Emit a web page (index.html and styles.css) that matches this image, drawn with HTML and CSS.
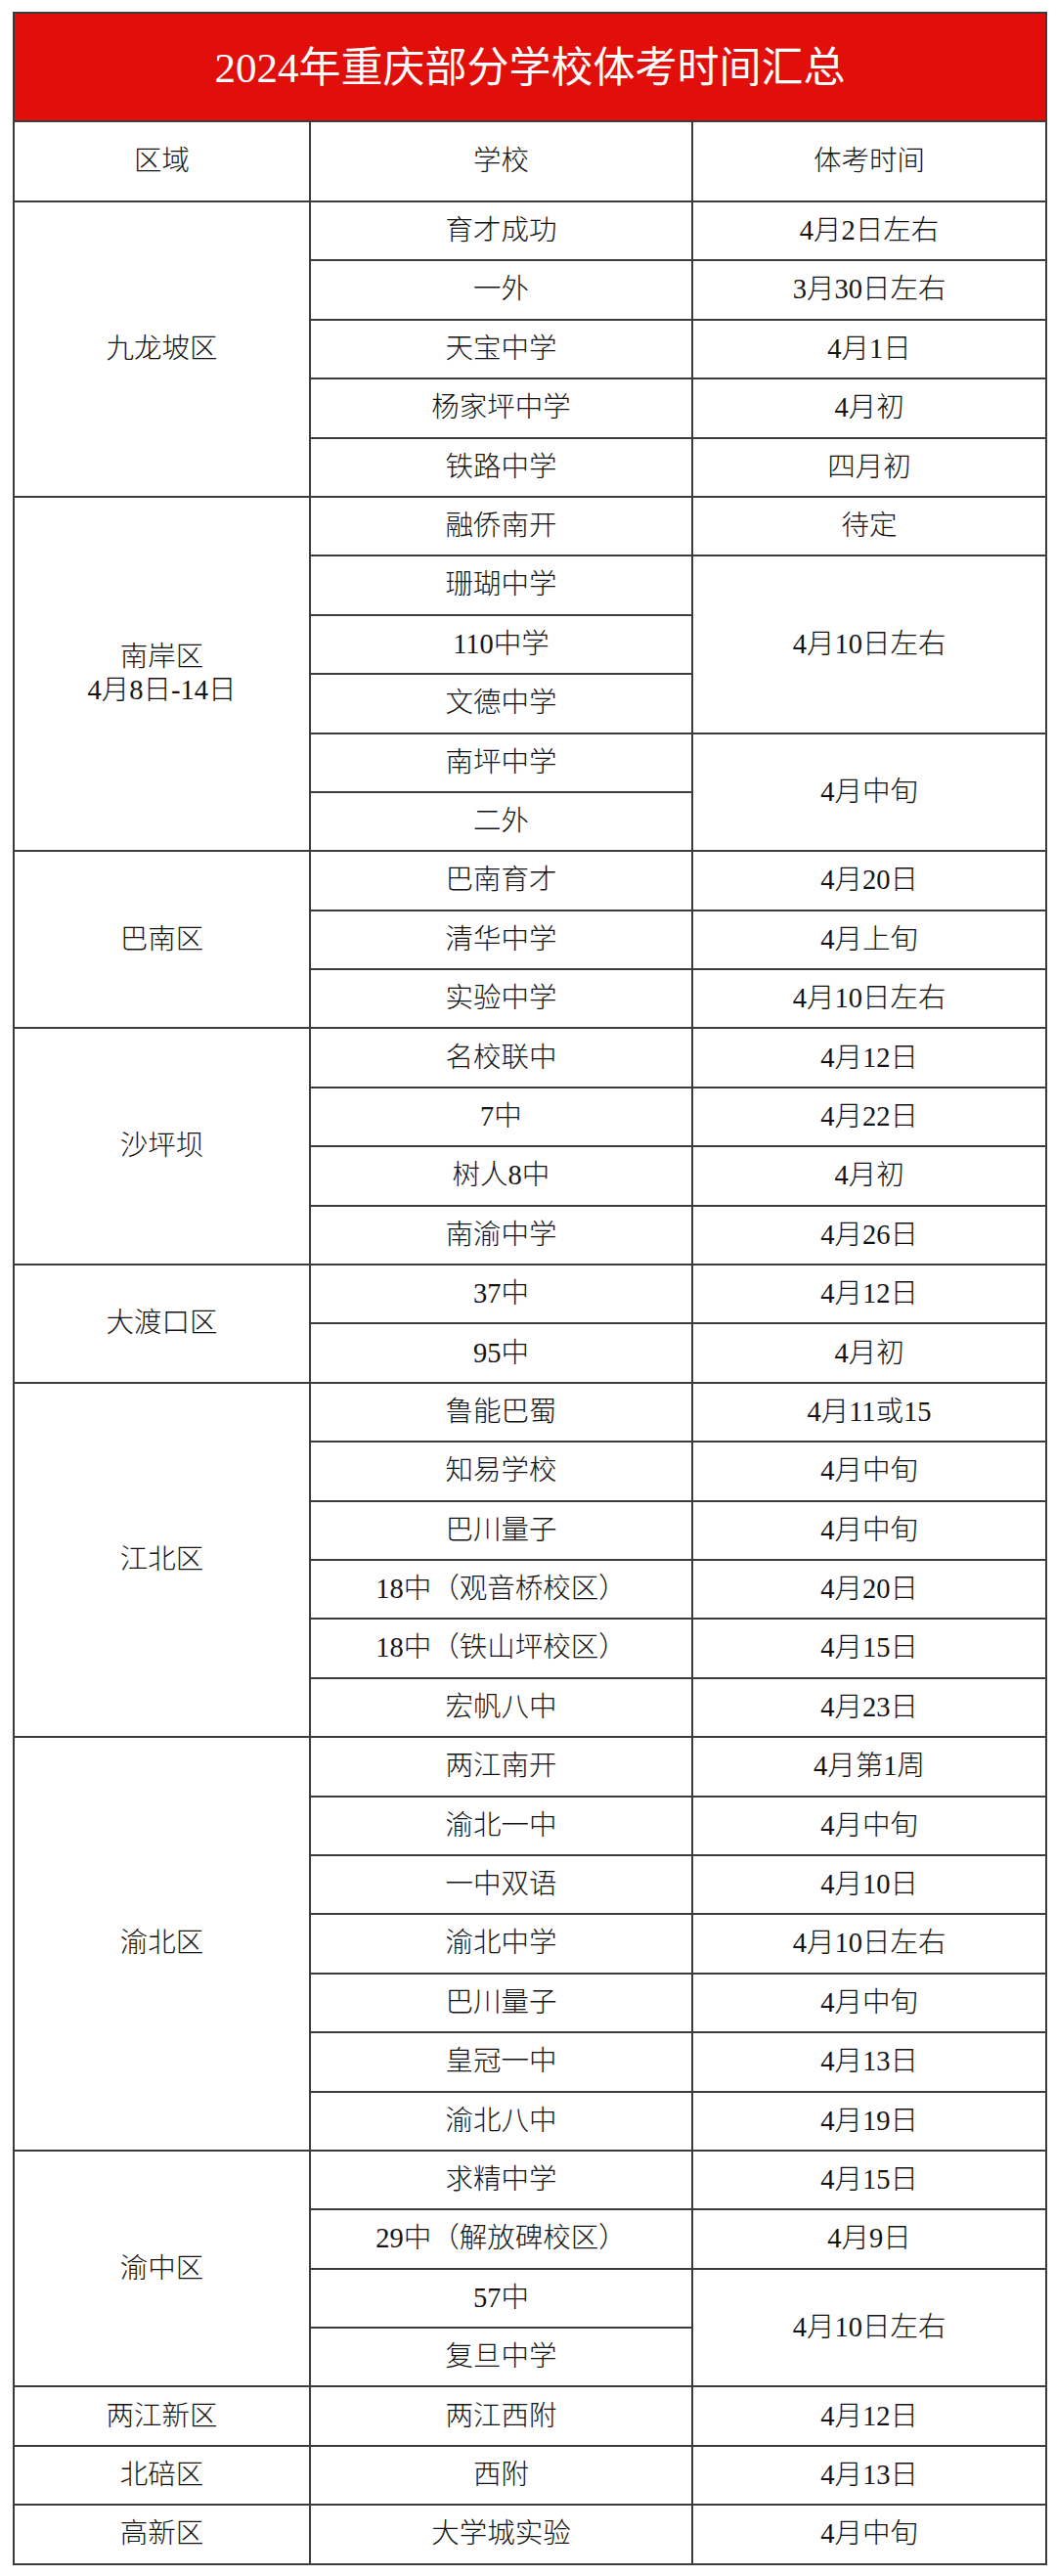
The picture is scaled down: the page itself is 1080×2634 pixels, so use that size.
FILE: index.html
```html
<!DOCTYPE html>
<html lang="zh-CN">
<head>
<meta charset="utf-8">
<title>2024年重庆部分学校体考时间汇总</title>
<link rel="stylesheet" href="styles.css">
</head>
<body>
<table class="sheet">
  <colgroup>
    <col class="c-area">
    <col class="c-school">
    <col class="c-time">
  </colgroup>
  <thead>
    <tr class="title-row"><th colspan="3">2024年重庆部分学校体考时间汇总</th></tr>
    <tr class="head-row"><th>区域</th><th>学校</th><th>体考时间</th></tr>
  </thead>
  <tbody>
    <tr><td rowspan="5">九龙坡区</td><td>育才成功</td><td>4月2日左右</td></tr>
    <tr><td>一外</td><td>3月30日左右</td></tr>
    <tr><td>天宝中学</td><td>4月1日</td></tr>
    <tr><td>杨家坪中学</td><td>4月初</td></tr>
    <tr><td>铁路中学</td><td>四月初</td></tr>

    <tr><td rowspan="6">南岸区<br>4月8日-14日</td><td>融侨南开</td><td>待定</td></tr>
    <tr><td>珊瑚中学</td><td rowspan="3">4月10日左右</td></tr>
    <tr><td>110中学</td></tr>
    <tr><td>文德中学</td></tr>
    <tr><td>南坪中学</td><td rowspan="2">4月中旬</td></tr>
    <tr><td>二外</td></tr>

    <tr><td rowspan="3">巴南区</td><td>巴南育才</td><td>4月20日</td></tr>
    <tr><td>清华中学</td><td>4月上旬</td></tr>
    <tr><td>实验中学</td><td>4月10日左右</td></tr>

    <tr><td rowspan="4">沙坪坝</td><td>名校联中</td><td>4月12日</td></tr>
    <tr><td>7中</td><td>4月22日</td></tr>
    <tr><td>树人8中</td><td>4月初</td></tr>
    <tr><td>南渝中学</td><td>4月26日</td></tr>

    <tr><td rowspan="2">大渡口区</td><td>37中</td><td>4月12日</td></tr>
    <tr><td>95中</td><td>4月初</td></tr>

    <tr><td rowspan="6">江北区</td><td>鲁能巴蜀</td><td>4月11或15</td></tr>
    <tr><td>知易学校</td><td>4月中旬</td></tr>
    <tr><td>巴川量子</td><td>4月中旬</td></tr>
    <tr><td>18中（观音桥校区）</td><td>4月20日</td></tr>
    <tr><td>18中（铁山坪校区）</td><td>4月15日</td></tr>
    <tr><td>宏帆八中</td><td>4月23日</td></tr>

    <tr><td rowspan="7">渝北区</td><td>两江南开</td><td>4月第1周</td></tr>
    <tr><td>渝北一中</td><td>4月中旬</td></tr>
    <tr><td>一中双语</td><td>4月10日</td></tr>
    <tr><td>渝北中学</td><td>4月10日左右</td></tr>
    <tr><td>巴川量子</td><td>4月中旬</td></tr>
    <tr><td>皇冠一中</td><td>4月13日</td></tr>
    <tr><td>渝北八中</td><td>4月19日</td></tr>

    <tr><td rowspan="4">渝中区</td><td>求精中学</td><td>4月15日</td></tr>
    <tr><td>29中（解放碑校区）</td><td>4月9日</td></tr>
    <tr><td>57中</td><td rowspan="2">4月10日左右</td></tr>
    <tr><td>复旦中学</td></tr>

    <tr><td>两江新区</td><td>两江西附</td><td>4月12日</td></tr>
    <tr><td>北碚区</td><td>西附</td><td>4月13日</td></tr>
    <tr><td>高新区</td><td>大学城实验</td><td>4月中旬</td></tr>
  </tbody>
</table>
</body>
</html>
```

FILE: styles.css
```css
html, body {
  margin: 0;
  padding: 0;
  background: #ffffff;
}

body {
  padding: 12px 12px 12px 13px;
  font-family: "Liberation Serif", "Noto Sans CJK SC", serif;
  color: #141414;
}

.sheet {
  width: 1056px;
  border-collapse: collapse;
  table-layout: fixed;
  border: 2px solid #3c3c3c;
}

.c-area { width: 303px; }
.c-school { width: 391px; }
.c-time { width: 362px; }

.sheet th,
.sheet td {
  border: 2px solid #3c3c3c;
  text-align: center;
  vertical-align: middle;
  padding: 0;
  font-size: 28.5px;
  font-weight: 300;
  line-height: 1.2;
}

.title-row th {
  height: 106px;
  background: #e20e0a;
  color: #ffffff;
  font-size: 43px;
  font-weight: 400;
  padding-top: 3px;
}

.head-row th {
  height: 80px;
}

.sheet tbody tr {
  height: 60.4px;
}
```
